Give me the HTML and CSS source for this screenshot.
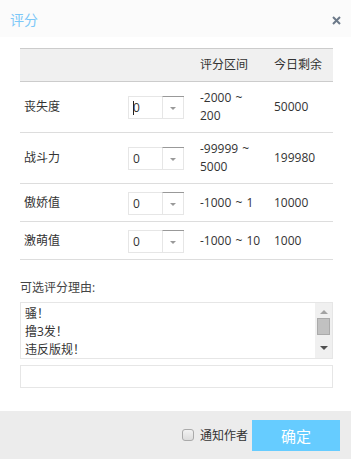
FILE: index.html
```html
<!DOCTYPE html>
<html lang="zh-CN">
<head>
    <meta charset="UTF-8">
    <meta name="viewport" content="width=device-width, initial-scale=1.0">
    <title>评分</title>
    <link rel="stylesheet" href="styles.css">
</head>
<body>
    <div class="dialog">
        <div class="dialog-head">
            <span class="dialog-title">评分</span>
            <svg class="dialog-close" width="9" height="9" viewBox="0 0 9 9">
                <path d="M1 1 L8 8 M8 1 L1 8" stroke="#6c7989" stroke-width="2" fill="none"/>
            </svg>
        </div>

        <div class="dialog-body">
            <table class="rate-table">
                <colgroup>
                    <col class="c-name">
                    <col class="c-score">
                    <col class="c-range">
                    <col class="c-left">
                </colgroup>
                <thead>
                    <tr>
                        <th></th>
                        <th></th>
                        <th>评分区间</th>
                        <th>今日剩余</th>
                    </tr>
                </thead>
                <tbody>
                    <tr class="tall">
                        <td>丧失度</td>
                        <td>
                            <div class="score-select">
                                <span class="score-value"><i class="caret"></i>0</span>
                                <span class="score-arrow"></span>
                            </div>
                        </td>
                        <td class="range">-2000 ~ 200</td>
                        <td>50000</td>
                    </tr>
                    <tr class="tall">
                        <td>战斗力</td>
                        <td>
                            <div class="score-select">
                                <span class="score-value">0</span>
                                <span class="score-arrow"></span>
                            </div>
                        </td>
                        <td class="range">-99999 ~ 5000</td>
                        <td>199980</td>
                    </tr>
                    <tr>
                        <td>傲娇值</td>
                        <td>
                            <div class="score-select">
                                <span class="score-value">0</span>
                                <span class="score-arrow"></span>
                            </div>
                        </td>
                        <td class="range">-1000 ~ 1</td>
                        <td>10000</td>
                    </tr>
                    <tr>
                        <td>激萌值</td>
                        <td>
                            <div class="score-select">
                                <span class="score-value">0</span>
                                <span class="score-arrow"></span>
                            </div>
                        </td>
                        <td class="range">-1000 ~ 10</td>
                        <td>1000</td>
                    </tr>
                </tbody>
            </table>

            <div class="reason-label">可选评分理由:</div>
            <div class="reason-list">
                <div class="reason-items">
                    <div>骚！</div>
                    <div>撸3发！</div>
                    <div>违反版规！</div>
                </div>
                <div class="scrollbar">
                    <span class="sb-up"></span>
                    <span class="sb-thumb"></span>
                    <span class="sb-down"></span>
                </div>
            </div>
            <div class="reason-input"></div>
        </div>

        <div class="dialog-foot">
            <label class="notify">
                <span class="check"></span>
                通知作者
            </label>
            <button class="btn-ok">确定</button>
        </div>
    </div>
</body>
</html>
```

FILE: styles.css
```css
body {
    margin: 0;
    background: #ffffff;
    font-family: "Open Sans", "Noto Sans CJK SC", sans-serif;
    font-size: 12px;
    color: #333333;
}
.dialog {
    width: 351px;
    height: 459px;
    display: flex;
    flex-direction: column;
}
.dialog-head {
    height: 37px;
    background: #fbfbfb;
    display: flex;
    align-items: center;
    justify-content: space-between;
    padding: 0 10px 0 10px;
}
.dialog-title {
    color: #7cc8f8;
    font-size: 14px;
    line-height: 16px;
    margin-top: 2px;
}
.dialog-close {
    margin-top: 3px;
}
.dialog-body {
    flex: 1;
    padding: 11px 18px 0 20px;
}
.rate-table {
    width: 313px;
    border-collapse: collapse;
    table-layout: fixed;
}
.c-name { width: 104px; }
.c-score { width: 72px; }
.c-range { width: 74px; }
.c-left { width: 63px; }
.rate-table th {
    background: #f0f0f0;
    border-top: 1px solid #cccccc;
    border-bottom: 1px solid #cccccc;
    height: 32px;
    font-weight: normal;
    text-align: left;
    padding: 0 4px;
    line-height: 16px;
}
.rate-table td {
    border-bottom: 1px solid #dddddd;
    height: 37px;
    padding: 0 4px;
    line-height: 18px;
}
.rate-table td.range {
    padding-right: 5px;
    word-spacing: 1px;
}
.rate-table tr.tall td {
    height: 50px;
}
.score-select {
    display: flex;
    width: 56px;
    height: 23px;
    border: 1px solid #e6e6e6;
    box-sizing: border-box;
    margin-top: 1px;
}
.score-value {
    width: 33px;
    padding-left: 4px;
    line-height: 22px;
    font-size: 12px;
    color: #333333;
    box-sizing: border-box;
    position: relative;
}
.caret {
    position: absolute;
    left: 4px;
    top: 4px;
    width: 1px;
    height: 14px;
    background: #222222;
}
.score-arrow {
    flex: 1;
    border-left: 1px solid #e6e6e6;
    border-top: 1px solid #999999;
    margin-top: -1px;
    margin-right: -1px;
    position: relative;
}
.score-arrow::after {
    content: "";
    position: absolute;
    left: 7px;
    top: 10px;
    border-left: 3px solid transparent;
    border-right: 3px solid transparent;
    border-top: 3px solid #999999;
}
.reason-label {
    margin-top: 20px;
    line-height: 16px;
    color: #444444;
}
.reason-list {
    margin-top: 6px;
    height: 57px;
    border: 1px solid #e6e6e6;
    box-sizing: border-box;
    display: flex;
    width: 313px;
}
.reason-items {
    flex: 1;
    padding: 2px 4px;
    line-height: 18px;
}
.scrollbar {
    width: 17px;
    background: #f0f0f0;
    display: flex;
    flex-direction: column;
    align-items: center;
}
.sb-up {
    margin-top: 7px;
    border-left: 4px solid transparent;
    border-right: 4px solid transparent;
    border-bottom: 4px solid #a3a3a3;
}
.sb-thumb {
    margin-top: 4px;
    width: 13px;
    height: 17px;
    background: #c1c1c1;
    border: 1px solid #aaaaaa;
    box-sizing: border-box;
}
.sb-down {
    margin-top: 11px;
    border-left: 4px solid transparent;
    border-right: 4px solid transparent;
    border-top: 4px solid #505050;
}
.reason-input {
    margin-top: 6px;
    width: 313px;
    height: 23px;
    border: 1px solid #e6e6e6;
    box-sizing: border-box;
}
.dialog-foot {
    height: 48px;
    background: #ececec;
    display: flex;
    align-items: center;
    justify-content: flex-end;
    padding-right: 11px;
}
.notify {
    display: flex;
    align-items: center;
    gap: 6px;
    color: #333333;
    font-size: 12px;
    margin-right: 4px;
}
.check {
    width: 12px;
    height: 12px;
    border: 1px solid #aaaaaa;
    border-radius: 3px;
    background: linear-gradient(#f2f2f2, #dcdcdc);
    box-sizing: border-box;
}
.btn-ok {
    width: 88px;
    height: 31px;
    border: none;
    background: #66ccff;
    color: #ffffff;
    font-family: "Noto Sans CJK SC", sans-serif;
    font-size: 15px;
    padding: 0;
}
```
